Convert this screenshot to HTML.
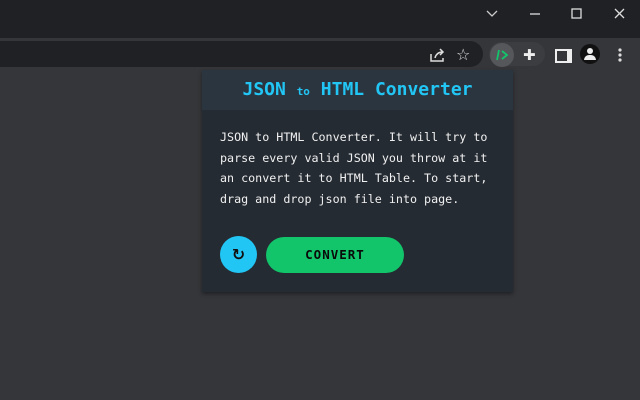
<!DOCTYPE html><html><head><style>
body{margin:0;width:640px;height:400px;background:#35363a;position:relative;overflow:hidden;font-family:"DejaVu Sans Mono","Liberation Mono",monospace}
.tb{position:absolute;left:0;top:0;width:640px;height:38px;background:#202124}
.tool{position:absolute;left:0;top:38px;width:640px;height:32px;background:#35363a}
.omni{position:absolute;left:0;top:41px;width:483px;height:26px;background:#202124;border-radius:0 13px 13px 0}
.ext{position:absolute;left:489px;top:42px;width:56px;height:24px;border-radius:12px;background:#3c3d41}
.popup{position:absolute;left:202px;top:70px;width:311px;height:222px;background:#252b33;box-shadow:0 2px 4px rgba(0,0,0,.4)}
.hd{height:40px;background:#2b3540;color:#22c6f5;font-weight:bold;font-size:18px;text-align:center;line-height:40px}
.hd small{font-size:11px}
.txt{position:absolute;left:18px;top:57px;color:#f0f0f0;font-size:11.7px;line-height:20.6px;width:275px}
.rf{position:absolute;left:18px;top:166px;width:37px;height:37px;border-radius:50%;background:#22c6f5;color:#111;font-size:16px;font-weight:bold;text-align:center;line-height:37px;font-family:"DejaVu Sans",sans-serif}
.cv{position:absolute;left:64px;top:167px;width:138px;height:36px;border-radius:18px;background:#12c46a;color:#0a0a0a;font-weight:bold;font-size:12.5px;letter-spacing:1px;text-align:center;line-height:36px}
</style></head><body>
<div class="tb"></div>
<svg style="position:absolute;left:485px;top:7px" width="150" height="14"><path d="M2 4l5 5 5-5" stroke="#ccc" fill="none" stroke-width="1.3"/><path d="M45 7h10" stroke="#ddd" stroke-width="1.3"/><rect x="87" y="2" width="9" height="9" stroke="#ddd" fill="none" stroke-width="1.3"/><path d="M130 2l9 9M139 2l-9 9" stroke="#ddd" stroke-width="1.3"/></svg>
<div class="tool"></div><div class="omni"></div>
<svg style="position:absolute;left:428px;top:46px" width="20" height="18"><path d="M3 8v7h12v-3" stroke="#ddd" fill="none" stroke-width="1.5"/><path d="M7 12c1-4 4-6 8-6M12 3l3 3-3 3" stroke="#ddd" fill="none" stroke-width="1.5"/></svg>
<div style="position:absolute;left:456px;top:45px;color:#ddd;font-size:16px;font-family:'DejaVu Sans'">☆</div>
<div class="ext"></div>
<div style="position:absolute;left:490px;top:43px;width:24px;height:24px;border-radius:50%;background:#55575b"></div>
<svg style="position:absolute;left:494px;top:47px" width="16" height="16"><path d="M5 3l-2 10M8 4l5 4-5 4" stroke="#12c46a" fill="none" stroke-width="1.8"/></svg>
<div style="position:absolute;left:523px;top:46px;color:#eee;font-size:15px;font-family:'DejaVu Sans'">✚</div>
<div style="position:absolute;left:555px;top:49px;width:10px;height:10px;border:2px solid #eee;border-right-width:5px"></div>
<div style="position:absolute;left:580px;top:44px;width:20px;height:20px;border-radius:50%;background:#111"></div>
<div style="position:absolute;left:587px;top:48px;width:6px;height:6px;border-radius:50%;background:#eee"></div>
<div style="position:absolute;left:584px;top:55px;width:12px;height:5px;border-radius:5px 5px 0 0;background:#eee"></div>
<svg style="position:absolute;left:617px;top:47px" width="6" height="16"><circle cx="3" cy="3" r="1.6" fill="#ddd"/><circle cx="3" cy="8" r="1.6" fill="#ddd"/><circle cx="3" cy="13" r="1.6" fill="#ddd"/></svg>
<div class="popup">
<div class="hd">JSON <small>to</small> HTML Converter</div>
<div class="txt">JSON to HTML Converter. It will try to parse every valid JSON you throw at it an convert it to HTML Table. To start, drag and drop json file into page.</div>
<div class="rf">↻</div>
<div class="cv">CONVERT</div>
</div>
</body></html>
